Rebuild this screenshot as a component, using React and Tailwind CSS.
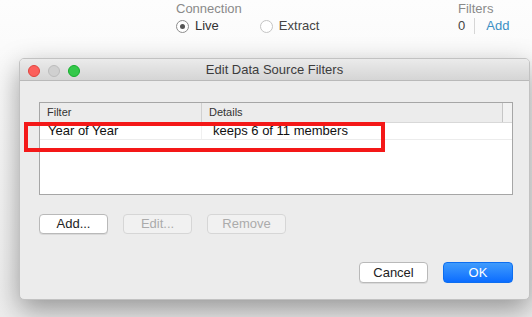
export default function App() {
  const font = { fontFamily: '"Liberation Sans", "Helvetica Neue", Arial, sans-serif' };
  return (
    <div className="relative w-[532px] h-[317px] overflow-hidden bg-gradient-to-b from-[#fdfdfd] via-[#f6f6f6] to-[#eeeeee]" style={font}>
      {/* Top connection strip */}
      <div className="flex h-[58px] pl-[176px] pt-[1px]">
        <div className="flex flex-col w-[282px]">
          <div className="text-[13px] leading-[16px] text-[#8a8a8a]">Connection</div>
          <div className="flex items-center mt-[1px] text-[13px] leading-[16px] text-[#333]">
            <span className="flex items-center justify-center w-[13px] h-[13px] rounded-full border border-[#8c8c8c] bg-white">
              <span className="w-[5px] h-[5px] rounded-full bg-[#555]" />
            </span>
            <span className="ml-[6px]">Live</span>
            <span className="ml-[41px] w-[13px] h-[13px] rounded-full border border-[#c4c4c4] bg-white" />
            <span className="ml-[6px] text-[#444]">Extract</span>
          </div>
        </div>
        <div className="flex flex-col">
          <div className="text-[13px] leading-[16px] text-[#8a8a8a]">Filters</div>
          <div className="flex items-center mt-[1px] text-[13px] leading-[16px]">
            <span className="text-[#444]">0</span>
            <span className="ml-[9px] w-px h-[16px] bg-[#d6d6d6]" />
            <span className="ml-[11px] text-[#3b8fc4]">Add</span>
          </div>
        </div>
      </div>

      {/* Dialog */}
      <div className="ml-[19px] w-[511px] h-[242px] rounded-[5px] bg-[#ececec] border border-[#c2c2c2] shadow-[0_10px_28px_rgba(0,0,0,0.38)] flex flex-col overflow-hidden">
        <div className="relative flex items-center justify-center h-[22px] shrink-0 bg-gradient-to-b from-[#ebebeb] to-[#d5d5d5] border-b border-[#b9b9b9]">
          <div className="absolute left-[8px] top-[6px] flex gap-[8px]">
            <span className="w-[12px] h-[12px] rounded-full bg-[#fc605c] border border-[#e0443e]" />
            <span className="w-[12px] h-[12px] rounded-full bg-[#d0d0d0] border border-[#bcbcbc]" />
            <span className="w-[12px] h-[12px] rounded-full bg-[#34c84a] border border-[#14ae2c]" />
          </div>
          <span className="text-[13px] text-[#3c3c3c]">Edit Data Source Filters</span>
        </div>

        <div className="flex flex-col px-[19px] pt-[21px]">
          {/* Table */}
          <div className="w-[474px] h-[93px] border border-[#a6a6a6] bg-white flex flex-col">
            <div className="flex h-[20px] bg-[#ececec] border-b border-[#d8d8d8] text-[11px] text-[#333] items-center">
              <div className="w-[162px] h-full flex items-center pl-[7px] border-r border-[#d0d0d0]">Filter</div>
              <div className="flex-1 h-full flex items-center pl-[7px] border-r border-[#c6c6c6]">Details</div>
              <div className="w-[9px] h-full bg-[#f2f2f2]" />
            </div>
            <div className="flex h-[17px] border-b border-[#ececec] text-[13px] text-[#111] items-center">
              <div className="w-[162px] h-full flex items-center pl-[8px] border-r border-[#f0f0f0]">Year of Year</div>
              <div className="flex-1 h-full flex items-center pl-[11px]">keeps 6 of 11 members</div>
            </div>
          </div>

          {/* Buttons */}
          <div className="flex mt-[19px] gap-[15px] text-[13px]">
            <div className="w-[69px] h-[20px] rounded-[4px] bg-white border border-[#b9b9b9] shadow-[0_1px_0_rgba(0,0,0,0.08)] flex items-center justify-center text-[#222]">Add...</div>
            <div className="w-[69px] h-[20px] rounded-[4px] bg-[#f1f1f1] border border-[#d6d6d6] flex items-center justify-center text-[#ababab]">Edit...</div>
            <div className="w-[79px] h-[20px] rounded-[4px] bg-[#f1f1f1] border border-[#d6d6d6] flex items-center justify-center text-[#ababab]">Remove</div>
          </div>

          <div className="flex justify-end mt-[28px] gap-[15px] text-[13px] pr-[0px] w-[474px]">
            <div className="w-[69px] h-[21px] rounded-[4px] bg-white border border-[#b9b9b9] shadow-[0_1px_0_rgba(0,0,0,0.08)] flex items-center justify-center text-[#222]">Cancel</div>
            <div className="w-[70px] h-[21px] rounded-[4px] bg-gradient-to-b from-[#3f9bfc] to-[#0a6cff] border border-[#0d6ef0] flex items-center justify-center text-white">OK</div>
          </div>
        </div>
      </div>

      {/* Red annotation box */}
      <div className="absolute left-[24px] top-[122px] w-[361px] h-[30px] border-[4px] border-[#f41818]" />
    </div>
  );
}
